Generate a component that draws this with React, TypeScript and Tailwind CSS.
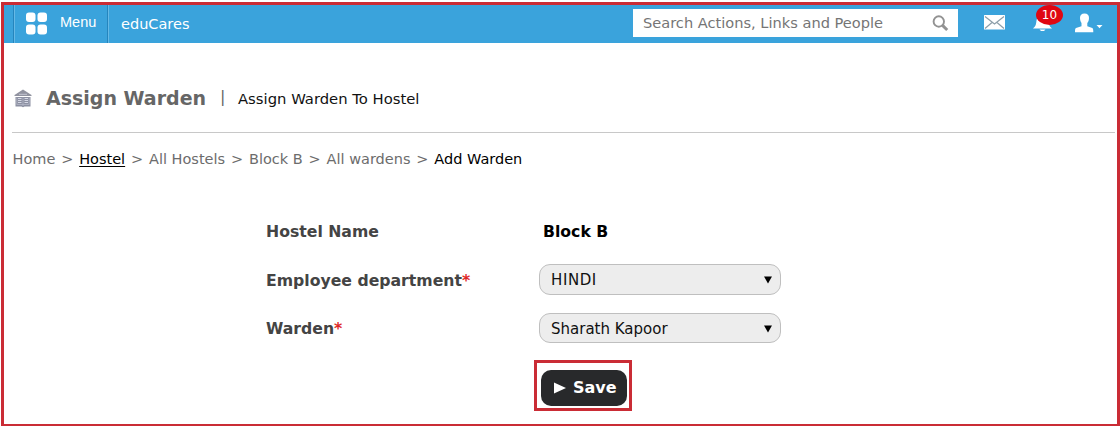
import React from "react";

function Select({ value, className }: { value: string; className: string }) {
  return (
    <div
      className={`flex w-[242px] items-center justify-between rounded-[11px] border border-[#bfbfbf] bg-[#ededed] pr-[8px] pl-[11px] text-[15px] leading-5 text-[#111] ${className}`}
    >
      <span>{value}</span>
      <svg width="8" height="8" viewBox="0 0 8 8" fill="#000">
        <path d="M0 0.5h8L4 7.5z" />
      </svg>
    </div>
  );
}

function Label({ text, required }: { text: string; required?: boolean }) {
  return (
    <div className={`w-[273px] text-[15.7px] leading-5 font-bold text-[#444] ${required ? "pt-[2px]" : ""}`}>
      {text}
      {required && <span className="text-[#e02828]">*</span>}
    </div>
  );
}

function Header() {
  return (
    <header className="flex h-[38px] shrink-0 items-center bg-[#3aa3dc] text-white">
      <div className="ml-[9px] h-full w-px bg-[#2585bd]" />
      <div className="h-full w-px bg-[#65b9e6]" />
      <svg className="mt-[-1px] ml-[11px]" width="22" height="23" viewBox="0 0 22 23" fill="#fff">
        <rect x="0" y="0.5" width="9.5" height="9.5" rx="3" />
        <rect x="11.5" y="0.5" width="9.5" height="9.5" rx="3" />
        <rect x="0" y="12.5" width="9.5" height="10" rx="3" />
        <rect x="11.5" y="12.5" width="9.5" height="10" rx="3" />
      </svg>
      <span className="mt-[-4px] ml-[12px] w-[47px] font-['Liberation_Sans',sans-serif] text-[14.5px] leading-5">
        Menu
      </span>
      <div className="h-full w-px bg-[#2585bd]" />
      <div className="h-full w-px bg-[#65b9e6]" />
      <span className="ml-[12px] w-[512px] text-[14.5px] leading-5">eduCares</span>
      <div className="mb-[2px] flex h-[28px] w-[325px] items-center justify-between bg-white pr-[9px] pl-[10px]">
        <span className="text-[14.6px] leading-5 text-[#757575]">Search Actions, Links and People</span>
        <svg width="17" height="17" viewBox="0 0 17 17" fill="none" stroke="#929292">
          <circle cx="6.8" cy="6.5" r="5.2" strokeWidth="1.9" />
          <path d="M10.5 10.4L15.2 15" strokeWidth="3" />
        </svg>
      </div>
      <svg className="mb-[3px] ml-[26px]" width="21" height="15" viewBox="0 0 21 15">
        <rect width="21" height="14.5" rx="0.5" fill="#fff" />
        <path d="M1 1.5l9.5 7.5L20 1.5M1 13.5l7-6M20 13.5l-7-6" fill="none" stroke="#8c9ea9" strokeWidth="1.2" />
      </svg>
      <div className="relative ml-[28px] h-[38px] w-[42px]">
        <svg className="mt-[9px]" width="19" height="18" viewBox="0 0 19 18" fill="#fff">
          <path d="M0 14.5C3 12 3 10 3.5 6.5C4 3 6 1 9.5 1s5.5 2 6 5.5S16 12 19 14.5z" />
          <path d="M6.5 15.5h6l-1.5 1.500H8z" />
        </svg>
        <span className="absolute top-0 left-[3px] flex h-[20px] w-[27px] items-center justify-center rounded-[50%] bg-[#e00712] text-[12px] leading-4">
          10
        </span>
      </div>
      <svg className="mb-[3px]" width="28" height="20" viewBox="0 0 28 20" fill="#fff">
        <path d="M5 5C5 2 6.5.5 9.5.5s4.500 1.500 4.500 4.500c0 2.800-1 4-1.700 5v3.200l5 1.800c.8.400 1 1.200 1 4.300H0c0-3.100.2-3.900 1-4.300l5.500-1.800V10C6 9 5 7.800 5 5z" />
        <path d="M21.500 12h6l-3 3.200z" />
      </svg>
    </header>
  );
}

const sep = <span className="mx-[5.85px]">&gt;</span>;

export default function App() {
  return (
    <div className="h-[426px] w-[1120px] overflow-hidden bg-white pt-[2px] pl-px font-['DejaVu_Sans',Verdana,sans-serif] whitespace-nowrap">
      <div className="flex h-[424px] w-[1119px] flex-col border-[3px] border-b-2 border-[#ca2c35]">
        <Header />
        <div className="mr-[2px] ml-[8px] flex h-[90px] shrink-0 items-start border-b border-[#c8c8c8] pt-[42px]">
          <svg className="mt-[4px] ml-[2px]" width="18" height="19" viewBox="0 0 18 19">
            <path d="M0.5 6L9 0.5 17.5 6v1H.5z" fill="#9193a0" />
            <path d="M5 5.300h8" stroke="#c3c6d2" />
            <path d="M1.5 8h15v9.500h-6l-1.500.8-1.500-.8h-6z" fill="#8c90a2" />
            <path d="M4 9.500h3.500M4 11.500h3.500M4 13.500h3.500M10.500 9.500H14M10.500 11.500H14M10.500 13.500H14" stroke="#d4d7e4" />
            <path d="M9 8.500v8.500M2.800 8.500v7h12.400v-7" stroke="#b8bccb" strokeWidth="0.7" fill="none" />
          </svg>
          <h1 className="ml-[14px] w-[174px] text-[19px] leading-[26px] font-bold text-[#666]">Assign Warden</h1>
          <span className="w-[18px] text-[16px] leading-[24px] text-[#666]">|</span>
          <span className="mt-[4px] text-[14.8px] leading-5 text-[#111]">Assign Warden To Hostel</span>
        </div>
        <nav className="mt-[16px] ml-[8.5px] flex h-5 shrink-0 text-[14.5px] leading-5 text-[#6c6c6c]">
          <span>Home</span>
          {sep}
          <span className="text-black underline underline-offset-2">Hostel</span>
          {sep}
          <span>All Hostels</span>
          {sep}
          <span>Block B</span>
          {sep}
          <span>All wardens</span>
          {sep}
          <span className="text-black">Add Warden</span>
        </nav>
        <main className="flex flex-col pl-[262px]">
          <div className="mt-[53px] flex h-5">
            <Label text="Hostel Name" />
            <span className="pl-[4px] text-[15.7px] leading-5 font-bold text-black">Block B</span>
          </div>
          <div className="mt-[22px] flex h-[31px] items-center">
            <Label text="Employee department" required />
            <Select value="HINDI" className="h-[31px] tracking-[0.6px]" />
          </div>
          <div className="mt-[18px] flex h-[30px] items-center">
            <Label text="Warden" required />
            <Select value="Sharath Kapoor" className="h-[30px] pt-px" />
          </div>
          <div className="mt-[17px] ml-[268px] flex h-[51px] w-[98px] items-end justify-end border-[3px] border-[#ca2c35] pr-[2px] pb-[2px]">
            <button className="flex h-[36px] w-[86px] items-center rounded-[10px] bg-[#28292b] pl-[13px] text-[16px] leading-5 font-bold text-white">
              <svg className="mr-[7px]" width="12" height="12" viewBox="0 0 12 12" fill="#fff">
                <path d="M0 0.5L12 6 0 11.5z" />
              </svg>
              Save
            </button>
          </div>
        </main>
      </div>
    </div>
  );
}
